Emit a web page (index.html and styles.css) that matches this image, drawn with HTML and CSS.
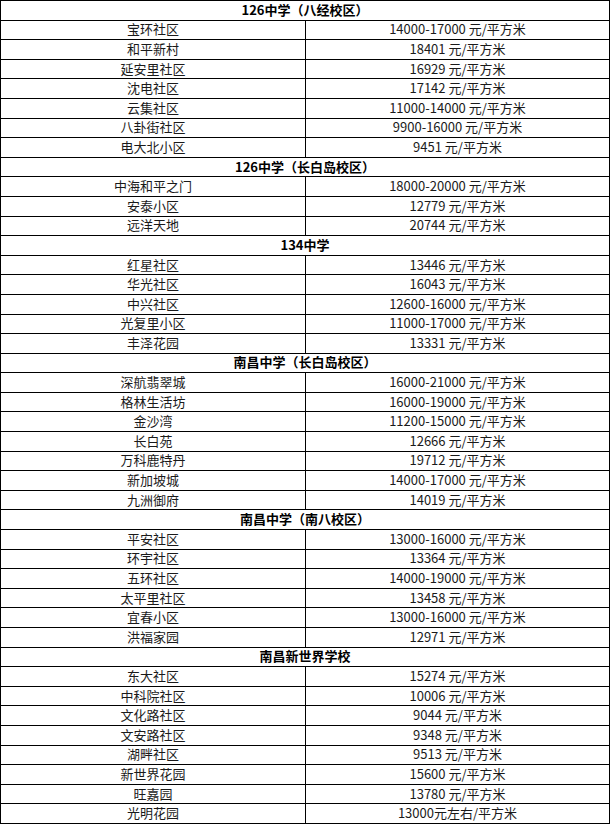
FILE: index.html
```html
<!DOCTYPE html>
<html lang="zh-CN">
<head>
<meta charset="utf-8">
<title>学区房价</title>
<link rel="stylesheet" href="styles.css">
</head>
<body>
<div class="table">
  <div class="cell head">126中学（八经校区）</div>
  <div class="cell">宝环社区</div><div class="cell">14000-17000 元/平方米</div>
  <div class="cell">和平新村</div><div class="cell">18401 元/平方米</div>
  <div class="cell">延安里社区</div><div class="cell">16929 元/平方米</div>
  <div class="cell">沈电社区</div><div class="cell">17142 元/平方米</div>
  <div class="cell">云集社区</div><div class="cell">11000-14000 元/平方米</div>
  <div class="cell">八卦街社区</div><div class="cell">9900-16000 元/平方米</div>
  <div class="cell">电大北小区</div><div class="cell">9451 元/平方米</div>
  <div class="cell head">126中学（长白岛校区）</div>
  <div class="cell">中海和平之门</div><div class="cell">18000-20000 元/平方米</div>
  <div class="cell">安泰小区</div><div class="cell">12779 元/平方米</div>
  <div class="cell">远洋天地</div><div class="cell">20744 元/平方米</div>
  <div class="cell head">134中学</div>
  <div class="cell">红星社区</div><div class="cell">13446 元/平方米</div>
  <div class="cell">华光社区</div><div class="cell">16043 元/平方米</div>
  <div class="cell">中兴社区</div><div class="cell">12600-16000 元/平方米</div>
  <div class="cell">光复里小区</div><div class="cell">11000-17000 元/平方米</div>
  <div class="cell">丰泽花园</div><div class="cell">13331 元/平方米</div>
  <div class="cell head">南昌中学（长白岛校区）</div>
  <div class="cell">深航翡翠城</div><div class="cell">16000-21000 元/平方米</div>
  <div class="cell">格林生活坊</div><div class="cell">16000-19000 元/平方米</div>
  <div class="cell">金沙湾</div><div class="cell">11200-15000 元/平方米</div>
  <div class="cell">长白苑</div><div class="cell">12666 元/平方米</div>
  <div class="cell">万科鹿特丹</div><div class="cell">19712 元/平方米</div>
  <div class="cell">新加坡城</div><div class="cell">14000-17000 元/平方米</div>
  <div class="cell">九洲御府</div><div class="cell">14019 元/平方米</div>
  <div class="cell head">南昌中学（南八校区）</div>
  <div class="cell">平安社区</div><div class="cell">13000-16000 元/平方米</div>
  <div class="cell">环宇社区</div><div class="cell">13364 元/平方米</div>
  <div class="cell">五环社区</div><div class="cell">14000-19000 元/平方米</div>
  <div class="cell">太平里社区</div><div class="cell">13458 元/平方米</div>
  <div class="cell">宜春小区</div><div class="cell">13000-16000 元/平方米</div>
  <div class="cell">洪福家园</div><div class="cell">12971 元/平方米</div>
  <div class="cell head">南昌新世界学校</div>
  <div class="cell">东大社区</div><div class="cell">15274 元/平方米</div>
  <div class="cell">中科院社区</div><div class="cell">10006 元/平方米</div>
  <div class="cell">文化路社区</div><div class="cell">9044 元/平方米</div>
  <div class="cell">文安路社区</div><div class="cell">9348 元/平方米</div>
  <div class="cell">湖畔社区</div><div class="cell">9513 元/平方米</div>
  <div class="cell">新世界花园</div><div class="cell">15600 元/平方米</div>
  <div class="cell">旺嘉园</div><div class="cell">13780 元/平方米</div>
  <div class="cell">光明花园</div><div class="cell">13000元左右/平方米</div>
</div>
</body>
</html>
```
FILE: styles.css
```css
html, body {
  margin: 0;
  padding: 0;
  background: #fff;
}
.table {
  width: 610px;
  box-sizing: border-box;
  display: grid;
  grid-template-columns: 304px 303px;
  grid-auto-rows: 18.6px;
  gap: 1px;
  padding: 1px;
  background: #000;
  font-family: "Noto Sans CJK SC", "Noto Sans", sans-serif;
  font-size: 13px;
  color: #1a1a1a;
}
.cell {
  background: #fff;
  display: flex;
  align-items: center;
  justify-content: center;
  line-height: 1;
  white-space: nowrap;
  padding-bottom: 2px;
  box-sizing: border-box;
}
.head {
  grid-column: 1 / span 2;
  font-weight: bold;
  color: #000;
}
```
